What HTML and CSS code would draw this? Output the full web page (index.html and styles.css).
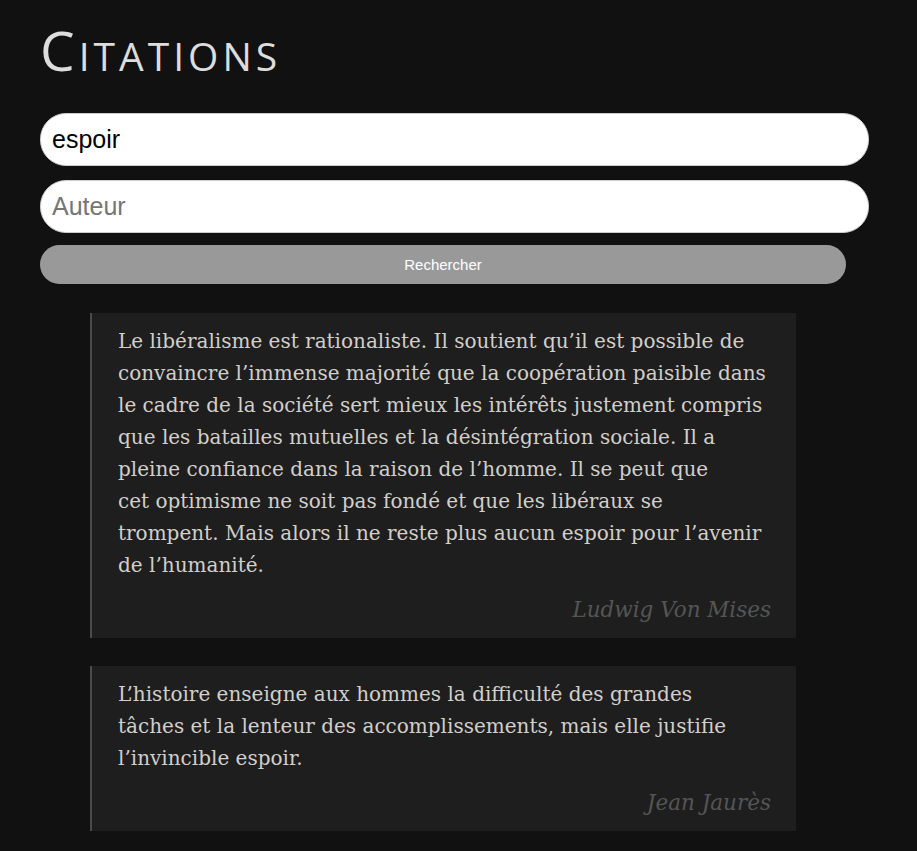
FILE: index.html
```html
<!DOCTYPE html>
<html lang="fr">
<head>
    <meta charset="UTF-8">
    <meta name="viewport" content="width=device-width, initial-scale=1.0">
    <title>Citations</title>
    <link rel="stylesheet" href="styles.css">
</head>
<body>
    <div class="container">
        <h1>Citations</h1>
        <form class="search" onsubmit="return false">
            <input type="text" id="keyword" value="espoir">
            <input type="text" id="author" placeholder="Auteur">
            <button type="submit">Rechercher</button>
        </form>

        <div class="quotes">
            <blockquote class="quote">
                <p>Le libéralisme est rationaliste. Il soutient qu’il est possible de convaincre l’immense majorité que la coopération paisible dans le cadre de la société sert mieux les intérêts justement compris que les batailles mutuelles et la désintégration sociale. Il a pleine confiance dans la raison de l’homme. Il se peut que cet&nbsp;optimisme ne soit pas fondé et que les libéraux se trompent.&nbsp;Mais alors il ne reste plus aucun espoir pour l’avenir de l’humanité.</p>
                <cite>Ludwig Von Mises</cite>
            </blockquote>
            <blockquote class="quote">
                <p>L’histoire enseigne aux hommes la difficulté des grandes tâches&nbsp;et la lenteur des accomplissements, mais elle justifie l’invincible espoir.</p>
                <cite>Jean Jaurès</cite>
            </blockquote>
        </div>
    </div>
</body>
</html>
```

FILE: styles.css
```css
body {
    background-color: #111111;
    margin: 0;
    padding: 0;
    font-family: "Liberation Sans", Arial, sans-serif;
}
.container {
    width: 806px;
    margin-left: 40px;
    padding-top: 18px;
}
h1 {
    font-family: "Open Sans", sans-serif;
    font-weight: 400;
    font-variant: small-caps;
    font-size: 55px;
    line-height: 64px;
    color: #dddddd;
    margin: 0 0 31px 0;
    letter-spacing: 4px;
}
.search input {
    display: block;
    box-sizing: border-box;
    width: calc(100% + 23px);
    height: 53px;
    padding: 0 11px;
    margin-bottom: 14px;
    border: 1px solid #cccccc;
    border-radius: 26px;
    background-color: white;
    font-family: "Liberation Sans", Arial, sans-serif;
    font-size: 25px;
    color: black;
    outline: none;
}
.search input + input {
    margin-bottom: 12px;
}
.search button {
    display: block;
    width: 100%;
    height: 39px;
    border: none;
    border-radius: 20px;
    background-color: #999999;
    color: white;
    font-family: "Liberation Sans", Arial, sans-serif;
    font-size: 15px;
    cursor: pointer;
}
.quotes {
    margin: 29px 50px 0 50px;
}
.quote {
    margin: 0 0 28px 0;
    padding: 12px 25px 16px 26px;
    background-color: #1e1e1e;
    border-left: 2px solid #4a4a4a;
}
.quote p {
    margin: 0;
    font-family: "DejaVu Serif", serif;
    font-size: 20px;
    line-height: 32px;
    color: #d2cfcb;
}
.quote cite {
    display: block;
    text-align: right;
    margin-top: 16px;
    font-family: "DejaVu Serif", serif;
    font-size: 21.5px;
    color: #555555;
}
```
